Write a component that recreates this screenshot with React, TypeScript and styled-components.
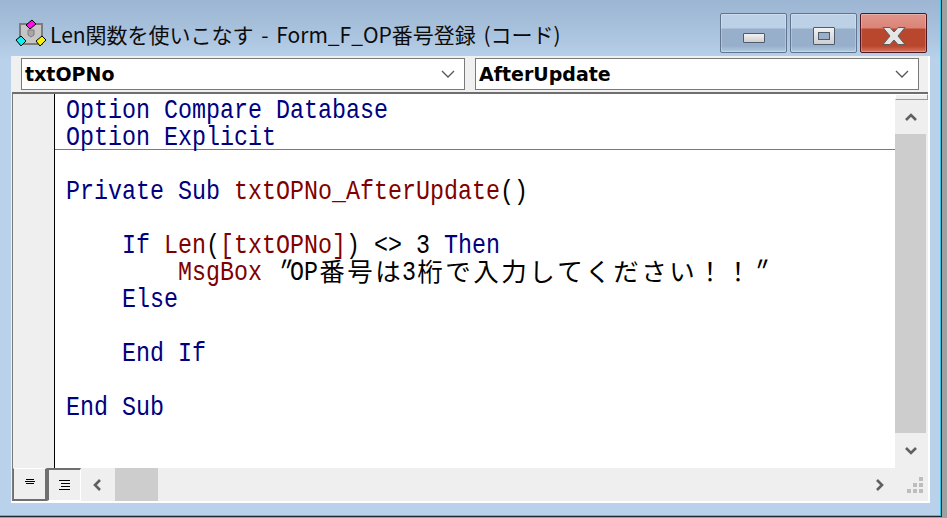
import React from "react";
import styled, { createGlobalStyle } from "styled-components";

const Global = createGlobalStyle`
  html, body { margin: 0; padding: 0; width: 947px; height: 518px; overflow: hidden; background: #a0a0a0; }
  #root { width: 947px; height: 518px; }
`;

const Frame = styled.div`
  width: 942px; height: 517px; box-sizing: border-box;
  display: flex; flex-direction: column;
  padding-left: 11px; padding-right: 11px; padding-bottom: 13px;
  background: linear-gradient(180deg, #9cb6d3 0, #a8c1dc 30px, #b9d1ea 60px, #b9d1ea 100%);
  border-right: 1px solid #1c2a33;
  border-bottom: 1px solid #1c2a33;
  box-shadow: inset -1px -1px 0 #2fc8e8;
`;
const TitleBar = styled.div`
  height: 56px; flex: none; display: flex; align-items: flex-start; box-sizing: border-box;
  padding: 13px 3px 0 4px;
`;
const AppIcon = styled.svg`
  width: 32px; height: 30px; flex: none; margin-top: 6px;
`;
const Title = styled.div`
  flex: 1; margin: 6px 0 0 3px; font: 21px/30px "Noto Sans CJK JP", "Liberation Sans", sans-serif;
  word-spacing: 3px; color: #0c0c0c; white-space: pre;
`;
const WinButtons = styled.div`
  display: flex; gap: 3px;
`;
const WinButton = styled.div<{ $close?: boolean }>`
  width: 67px; height: 40px; box-sizing: border-box; border-radius: 2px;
  display: flex; align-items: center; justify-content: center; padding-top: 5px;
  border: 1px solid ${(p) => (p.$close ? "#4d1820" : "#61758f")};
  background: ${(p) =>
    p.$close
      ? "linear-gradient(180deg, #e0958a 0, #da8477 14px, #b9472e 15px, #b9472e 32px, #d9745f 38px)"
      : "linear-gradient(180deg, #bcd0e6 0, #bcd0e6 14px, #97afca 15px, #97afca 32px, #b4cbe4 38px)"};
  box-shadow: inset 0 0 0 1px rgba(255, 255, 255, 0.25);
`;
const MinGlyph = styled.div`
  width: 22px; height: 10px; box-sizing: border-box; margin-top: 4px;
  background: linear-gradient(180deg, #f2f2f2, #cfcfcf); border: 1px solid #4d5b6c; border-radius: 1px;
`;
const MaxGlyph = styled.div`
  width: 22px; height: 18px; box-sizing: border-box;
  background: linear-gradient(180deg, #f2f2f2, #cfcfcf); border: 1px solid #4d5b6c; border-radius: 1px;
  display: flex; align-items: center; justify-content: center;
  &::after { content: ""; width: 10px; height: 6px; background: #97afca; border: 1px solid #4d5b6c; }
`;

const Client = styled.div`
  flex: 1; display: flex; flex-direction: column; min-height: 0; background: #f0f0f0;
  border-right: 2px solid #fff; border-bottom: 2px solid #fff;
`;
const ComboRow = styled.div`
  height: 36px; flex: none; box-sizing: border-box; padding: 2px 0 2px 10px; display: flex; gap: 10px;
`;
const Combo = styled.div<{ $w: number }>`
  width: ${(p) => p.$w}px; height: 32px; box-sizing: border-box; background: #fff; border: 1px solid #7a7a7a;
  display: flex; align-items: center; justify-content: space-between; padding: 0 9px 0 3px;
  font: bold 19px "DejaVu Sans", Verdana, sans-serif; color: #000;
`;
const Editor = styled.div`
  flex: 1; min-height: 0; display: grid; grid-template-columns: 882px 33px; grid-template-rows: 374px 33px;
  border-top: 2px solid #6e6e6e; margin-left: 1px; border-left: 1px solid #7a7a7a;
`;
const Main = styled.div`
  display: flex; min-height: 0;
`;
const Gutter = styled.div`
  width: 41px; flex: none; background: #efefef; border-right: 1px solid #000;
`;
const Code = styled.div`
  flex: 1; background: #fff; padding-top: 2px; overflow: hidden;
`;
const Line = styled.div<{ $sep?: boolean }>`
  height: 27px; box-sizing: border-box; padding-left: 11px; display: flex; white-space: pre;
  border-bottom: ${(p) => (p.$sep ? "1px solid #7a7a7a" : "0")};
`;
const colors = { k: "#00007f", i: "#7f0000", t: "#000" };
const Tok = styled.span<{ $c: keyof typeof colors; $skew?: boolean }>`
  display: inline-block; font: 23.33px/27px "Liberation Mono", "Courier New", monospace;
  color: ${(p) => colors[p.$c]};
  transform: translateY(2px) scaleY(1.22) ${(p) => (p.$skew ? "skewX(-22deg)" : "")};
  transform-origin: 50% 52%;
`;
const Cjk = styled.span`
  display: inline-block; font: 25.5px/27px "Noto Sans CJK JP", sans-serif; width: 28px; height: 27px; text-align: center; color: #000;
  transform: translateY(-2px);
`;
const VScroll = styled.div`
  display: flex; flex-direction: column; background: #efefef;
`;
const Splitter = styled.div`
  height: 6px; flex: none; box-sizing: border-box; background: #f0f0f0; border: 1px solid #9a9a9a; border-top-color: #fff; border-left-color: #fff; width: 33px;
`;
const VBtn = styled.div<{ $h: number }>`
  height: ${(p) => p.$h}px; flex: none; display: flex; align-items: center; justify-content: center; margin-right: 2px;
`;
const VThumb = styled.div`
  flex: 1; background: #cdcdcd; margin-right: 2px;
`;
const Bottom = styled.div`
  grid-column: 1 / -1; display: flex; align-items: stretch; background: #efefef;
`;
const ViewBtn = styled.div<{ $pressed?: boolean }>`
  width: 34px; height: 33px; flex: none; box-sizing: border-box; display: flex; align-items: center; justify-content: center;
  background: #efefef;
  padding-bottom: ${(p) => (p.$pressed ? 0 : 6)}px;
  border-style: solid; border-width: 1px;
  border-color: ${(p) => (p.$pressed ? "#6f6f6f #fff #fff #6f6f6f" : "#fff #6f6f6f #6f6f6f #6f6f6f")};
  border-top-width: ${(p) => (p.$pressed ? 2 : 1)}px;
  border-left-width: ${(p) => (p.$pressed ? 2 : 1)}px;
  border-bottom-width: ${(p) => (p.$pressed ? 1 : 2)}px;
  border-right-width: ${(p) => (p.$pressed ? 1 : 2)}px;
`;
const HBtn = styled.div<{ $w: number }>`
  width: ${(p) => p.$w}px; flex: none; display: flex; align-items: center; justify-content: center;
`;
const HThumb = styled.div`
  width: 43px; flex: none; background: #cdcdcd;
`;
const HTrack = styled.div`
  flex: 1;
`;
const Grip = styled.div`
  width: 33px; flex: none; box-sizing: border-box; display: flex; align-items: center; justify-content: flex-end; padding-right: 5px;
`;

const Chevron = ({ d }: { d: string }) => (
  <svg width="14" height="14" viewBox="0 0 14 14">
    <path d={d} fill="none" stroke="#606060" strokeWidth="2.6" />
  </svg>
);

const T = ({ k, c, skew }: { k: string; c: keyof typeof colors; skew?: boolean }) => <Tok $c={c} $skew={skew}>{k}</Tok>;

export default function App() {
  return (
    <>
      <Global />
      <Frame>
        <TitleBar>
          <AppIcon viewBox="0 0 32 30">
            <rect x="5" y="5" width="22" height="20" fill="#c6c6c6" stroke="#7c7c7c" strokeWidth="2" />
            <path d="M13 11l6 0 0 5-3 2-3-2z" fill="#a8a8a8" stroke="#7c7c7c" />
            <path d="M11 6l6-5 4 4-6 5z" fill="#ff10e8" stroke="#000" strokeWidth="1" />
            <path d="M1 21l5-4 5 5-5 5z" fill="#10f0f0" stroke="#000" strokeWidth="1" />
            <path d="M21 22l6-5 4 4-6 6z" fill="#f4f010" stroke="#000" strokeWidth="1" />
          </AppIcon>
          <Title>Len関数を使いこなす - Form_F_OP番号登録 (コード)</Title>
          <WinButtons>
            <WinButton><MinGlyph /></WinButton>
            <WinButton><MaxGlyph /></WinButton>
            <WinButton $close>
              <svg width="24" height="20" viewBox="0 0 24 20">
                <path d="M1 1.500h7L12 6l4-4.500h7L16 10l7 8.500h-7L12 14l-4 4.500H1L8 10z" fill="#e6e6e6" stroke="#5c5c5c" strokeWidth="1" />
              </svg>
            </WinButton>
          </WinButtons>
        </TitleBar>
        <Client>
          <ComboRow>
            <Combo $w={444}>txtOPNo
              <svg width="14" height="9" viewBox="0 0 14 9"><path d="M1 1l6 6 6-6" fill="none" stroke="#555" strokeWidth="1.300" /></svg>
            </Combo>
            <Combo $w={444}>AfterUpdate
              <svg width="14" height="9" viewBox="0 0 14 9"><path d="M1 1l6 6 6-6" fill="none" stroke="#555" strokeWidth="1.300" /></svg>
            </Combo>
          </ComboRow>
          <Editor>
            <Main>
              <Gutter />
              <Code>
                <Line><T c="k" k="Option Compare Database" /></Line>
                <Line $sep><T c="k" k="Option Explicit" /></Line>
                <Line />
                <Line><T c="k" k="Private Sub " /><T c="i" k="txtOPNo_AfterUpdate" /><T c="t" k="()" /></Line>
                <Line />
                <Line><T c="k" k="    If " /><T c="i" k="Len" /><T c="t" k="(" /><T c="i" k="[txtOPNo]" /><T c="t" k=") <> 3 " /><T c="k" k="Then" /></Line>
                <Line>
                  <T c="t" k="        " /><T c="i" k="MsgBox" /><T c="t" k=" " /><T c="t" k='"' skew /><T c="t" k="OP" />
                  <Cjk>番</Cjk><Cjk>号</Cjk><Cjk>は</Cjk><T c="t" k="3" /><Cjk>桁</Cjk><Cjk>で</Cjk><Cjk>入</Cjk><Cjk>力</Cjk><Cjk>し</Cjk><Cjk>て</Cjk><Cjk>く</Cjk><Cjk>だ</Cjk><Cjk>さ</Cjk><Cjk>い</Cjk><Cjk>！</Cjk><Cjk>！</Cjk><T c="t" k='"' skew />
                </Line>
                <Line><T c="k" k="    Else" /></Line>
                <Line />
                <Line><T c="k" k="    End If" /></Line>
                <Line />
                <Line><T c="k" k="End Sub" /></Line>
              </Code>
            </Main>
            <VScroll>
              <Splitter />
              <VBtn $h={34}><Chevron d="M2 10l5-5 5 5" /></VBtn>
              <VThumb />
              <VBtn $h={35}><Chevron d="M2 4l5 5 5-5" /></VBtn>
            </VScroll>
            <Bottom>
              <ViewBtn>
                <svg width="10" height="5" viewBox="0 0 10 5"><path d="M1 .5h8M0 2.500h10M1 4.500h8" stroke="#000" /></svg>
              </ViewBtn>
              <ViewBtn $pressed>
                <svg width="11" height="11" viewBox="0 0 11 11"><path d="M0 .5h11M2 3.500h9M2 6.500h9M0 9.500h11" stroke="#000" /></svg>
              </ViewBtn>
              <HBtn $w={34}><Chevron d="M9 2L4 7l5 5" /></HBtn>
              <HThumb />
              <HTrack />
              <HBtn $w={33}><Chevron d="M5 2l5 5-5 5" /></HBtn>
              <Grip>
                <svg width="16" height="16" viewBox="0 0 16 16" fill="#bdbdbd">
                  <rect x="12" y="0" width="4" height="4" /><rect x="6" y="6" width="4" height="4" /><rect x="12" y="6" width="4" height="4" />
                  <rect x="0" y="12" width="4" height="4" /><rect x="6" y="12" width="4" height="4" /><rect x="12" y="12" width="4" height="4" />
                </svg>
              </Grip>
            </Bottom>
          </Editor>
        </Client>
      </Frame>
    </>
  );
}
